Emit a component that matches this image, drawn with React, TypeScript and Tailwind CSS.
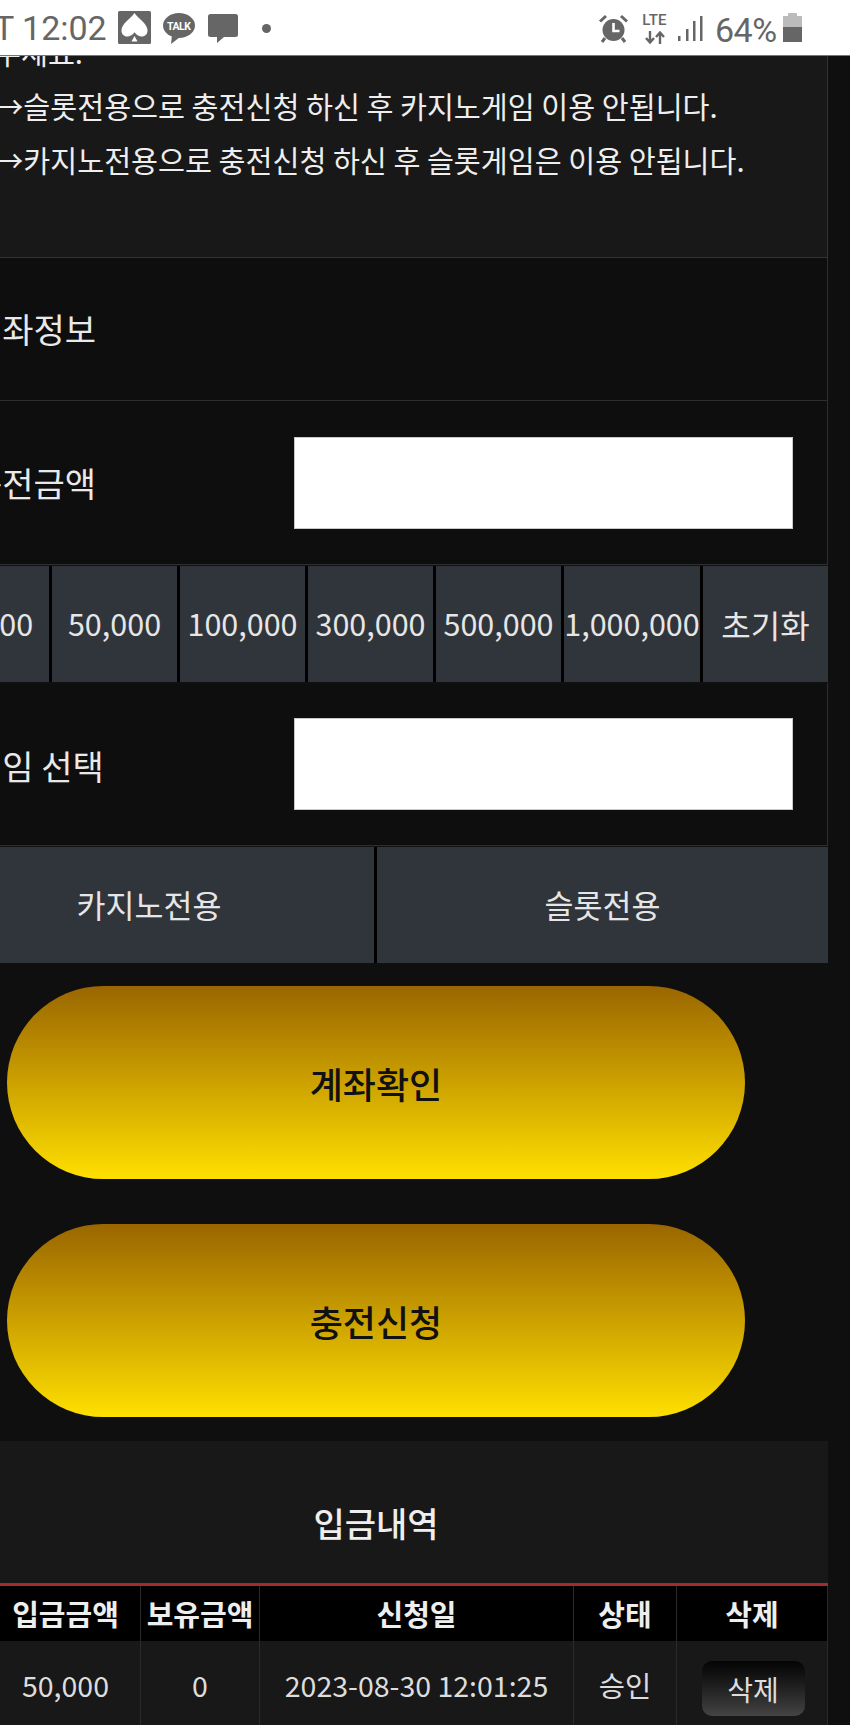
const amounts = [
  { label: "30,000", w: "w-[125px]", ko: false },
  { label: "50,000", w: "w-[125px]", ko: false },
  { label: "100,000", w: "w-[125px]", ko: false },
  { label: "300,000", w: "w-[125px]", ko: false },
  { label: "500,000", w: "w-[125px]", ko: false },
  { label: "1,000,000", w: "w-[136px]", ko: false },
  { label: "초기화", w: "w-[125px]", ko: true },
];

function StatusLeft() {
  return (
    <div className="flex items-center">
      <span className="font-['Roboto',sans-serif] text-[34px] leading-none text-[#666] whitespace-pre -ml-[6px] w-[124px]">T 12:02</span>
      <svg width="33" height="33" viewBox="0 0 33 33" className="-mt-[1px]">
        <rect width="33" height="33" rx="1.5" fill="#666" />
        <path d="M16.5 2C13 7.500 4 12 3.500 19c-.3 4.500 3 7 6.500 6.500 2.500-.3 4.500-1.700 6.500-4.200 2 2.500 4 3.900 6.500 4.200 3.500.5 6.800-2 6.500-6.500C29 12 20 7.500 16.500 2z" fill="#fff" />
        <path d="M16.500 25l-3 5.500h6z" fill="#fff" />
      </svg>
      <svg width="32" height="31" viewBox="0 0 32 31" className="ml-[12px]">
        <ellipse cx="16" cy="12.5" rx="16" ry="12.5" fill="#666" />
        <path d="M9 22l-1 9 9-7z" fill="#666" />
        <text x="16" y="16.5" textAnchor="middle" fontSize="10.5" fontWeight="700" fill="#fff" fontFamily="Roboto, sans-serif" textLength="24">TALK</text>
      </svg>
      <svg width="30" height="29" viewBox="0 0 30 29" className="ml-[13px]">
        <path d="M2.5 0h25A2.5 2.5 0 0 1 30 2.5v18a2.5 2.5 0 0 1-2.5 2.5H16l-7 6v-6H2.5A2.5 2.5 0 0 1 0 20.500v-18A2.500 2.500 0 0 1 2.500 0z" fill="#666" />
      </svg>
      <span className="ml-[24px] h-[9px] w-[9px] rounded-full bg-[#666]" />
    </div>
  );
}

function StatusRight() {
  return (
    <div className="absolute right-[48px] top-[13px] flex items-start">
      <svg width="29" height="30" viewBox="0 0 29 30" className="mt-[1px]">
        <circle cx="14.500" cy="16" r="11" fill="#666" />
        <path d="M14.500 9v8h6" fill="none" stroke="#fff" strokeWidth="2.600" />
        <path d="M1 7.500L7 2M28 7.500L22 2" stroke="#666" strokeWidth="3" />
        <path d="M6 24l-3 4M23 24l3 4" stroke="#666" strokeWidth="3" />
      </svg>
      <div className="ml-[13px] flex w-[27px] flex-col items-center">
        <span className="font-['Roboto',sans-serif] text-[15px] font-medium leading-[14px] text-[#666] tracking-[0.2px]">LTE</span>
        <svg width="21" height="13" viewBox="0 0 21 13" className="mt-[4px]">
          <path d="M6 0v11M2 7l4 4.500L10 7" fill="none" stroke="#666" strokeWidth="2.400" />
          <path d="M16 13V2M12 6l4-4.500L20 6" fill="none" stroke="#666" strokeWidth="2.400" />
        </svg>
      </div>
      <svg width="25" height="27" viewBox="0 0 25 27" className="ml-[10px] mt-[2px]">
        <rect x="0" y="21" width="2.500" height="5" fill="#666" />
        <rect x="8" y="14" width="2.500" height="12" fill="#666" />
        <rect x="15" y="6" width="2.500" height="20" fill="#666" />
        <rect x="22" y="1" width="2.500" height="25" fill="#666" />
      </svg>
      <span className="ml-[12px] w-[68px] font-['Roboto',sans-serif] text-[34px] leading-[33px] mt-[1px] text-[#666] tracking-[-0.5px]">64%</span>
      <div className="flex w-[19px] flex-col items-center">
        <span className="h-[3px] w-[9px] rounded-t-[1px] bg-[#bbb]" />
        <span className="h-[11px] w-[19px] bg-[#bbb]" />
        <span className="h-[15px] w-[19px] bg-[#666]" />
      </div>
    </div>
  );
}

function FormRow({ label, h, labelClass }: { label: string; h: string; labelClass: string }) {
  return (
    <div className={`flex items-center justify-between border-b border-r border-[#2e2e2e] bg-[#0e0e0e] pl-[47px] pr-[34px] ${h}`}>
      <span className={`text-[34px] leading-none text-[#e9e9e9] ${labelClass}`}>{label}</span>
      <input className="h-[92px] w-[499px] border border-[#c8c8c8] bg-white" />
    </div>
  );
}

function GoldButton({ label }: { label: string }) {
  return (
    <button className="mx-auto flex h-[193px] w-[738px] items-center justify-center rounded-[97px] bg-gradient-to-b from-[#9a6600] to-[#ffe000] pt-[1px] text-[36px] font-medium text-[#111]">
      {label}
    </button>
  );
}

export default function App() {
  return (
    <div className="relative h-[1725px] w-[850px] overflow-hidden bg-[#0f0f0f] font-['Noto_Sans_CJK_KR',sans-serif]">
      <div className="absolute left-0 top-0 z-10 flex h-[56px] w-[850px] items-center border-b border-[#777] bg-white pt-[1px]">
        <StatusLeft />
        <StatusRight />
      </div>

      <main className="-ml-[76px] w-[904px]">
        <section className="h-[258px] border-b border-r border-[#333] bg-[#181818] pl-[70px] pt-[24px] text-[29.300px] leading-[54px] text-[#eee]">
          <p>주세요.</p>
          <p>→슬롯전용으로 충전신청 하신 후 카지노게임 이용 안됩니다.</p>
          <p>→카지노전용으로 충전신청 하신 후 슬롯게임은 이용 안됩니다.</p>
        </section>

        <div className="flex h-[143px] items-center border-b border-r border-[#2e2e2e] bg-[#0e0e0e] pl-[47px]">
          <span className="text-[34px] leading-none text-[#e9e9e9]">계좌정보</span>
        </div>
        <FormRow label="충전금액" h="h-[164px]" labelClass="" />

        <div className="flex h-[118px] gap-[3px] border-y border-[#111] bg-black">
          {amounts.map((a) => (
            <button key={a.label} className={`${a.w} flex items-center justify-center whitespace-nowrap bg-[#30343b] ${a.ko ? "text-[32px]" : "text-[30.500px]"} text-[#e6e6e6]`}>
              {a.label}
            </button>
          ))}
        </div>

        <FormRow label="게임 선택" h="h-[163px]" labelClass="pt-[4px]" />

        <div className="flex h-[118px] w-[904px] gap-[3px] border-y border-[#111] bg-black">
          <button className="w-[450px] bg-[#30343b] text-[31.500px] text-[#e6e6e6]">카지노전용</button>
          <button className="w-[451px] bg-[#30343b] text-[31.500px] text-[#e6e6e6]">슬롯전용</button>
        </div>

        <div className="flex flex-col gap-[45px] pt-[22px]">
          <GoldButton label="계좌확인" />
          <GoldButton label="충전신청" />
        </div>

        <section className="mt-[24px] bg-[#181818]">
          <h2 className="flex h-[142px] items-center justify-center pt-[22px] text-[34px] font-medium leading-none text-[#eee]">입금내역</h2>
          <div className="flex h-[58px] items-center border-t-[3px] border-[#a52a2a] bg-black text-[29px] font-bold text-[#eee]">
            <div className="flex h-full w-[66px] items-center justify-center">번호</div>
            <div className="flex h-full w-[150px] items-center justify-center border-l border-[#2a2a2a]">입금금액</div>
            <div className="flex h-full w-[119px] items-center justify-center border-l border-[#2a2a2a] whitespace-nowrap">보유금액</div>
            <div className="flex h-full w-[314px] items-center justify-center border-l border-[#2a2a2a]">신청일</div>
            <div className="flex h-full w-[103px] items-center justify-center border-l border-[#2a2a2a]">상태</div>
            <div className="flex h-full w-[152px] items-center justify-center border-x border-[#2a2a2a]">삭제</div>
          </div>
          <div className="flex h-[85px] items-start text-[28.500px] text-[#ddd]">
            <div className="flex h-full w-[66px] items-center justify-center pt-[4px]">1</div>
            <div className="flex h-full w-[150px] items-center justify-center border-l border-[#2a2a2a] pt-[4px]">50,000</div>
            <div className="flex h-full w-[119px] items-center justify-center border-l border-[#2a2a2a] pt-[4px]">0</div>
            <div className="flex h-full w-[314px] items-center justify-center border-l border-[#2a2a2a] whitespace-nowrap pt-[4px]">2023-08-30 12:01:25</div>
            <div className="flex h-full w-[103px] items-center justify-center border-l border-[#2a2a2a] pt-[4px]">승인</div>
            <div className="flex h-full w-[152px] items-start justify-center border-x border-[#2a2a2a] pl-[2px] pt-[20px]">
              <button className="h-[55px] w-[103px] rounded-[10px] bg-gradient-to-b from-[#050505] to-[#444] text-[28px] text-[#ddd]">삭제</button>
            </div>
          </div>
        </section>
      </main>
    </div>
  );
}
